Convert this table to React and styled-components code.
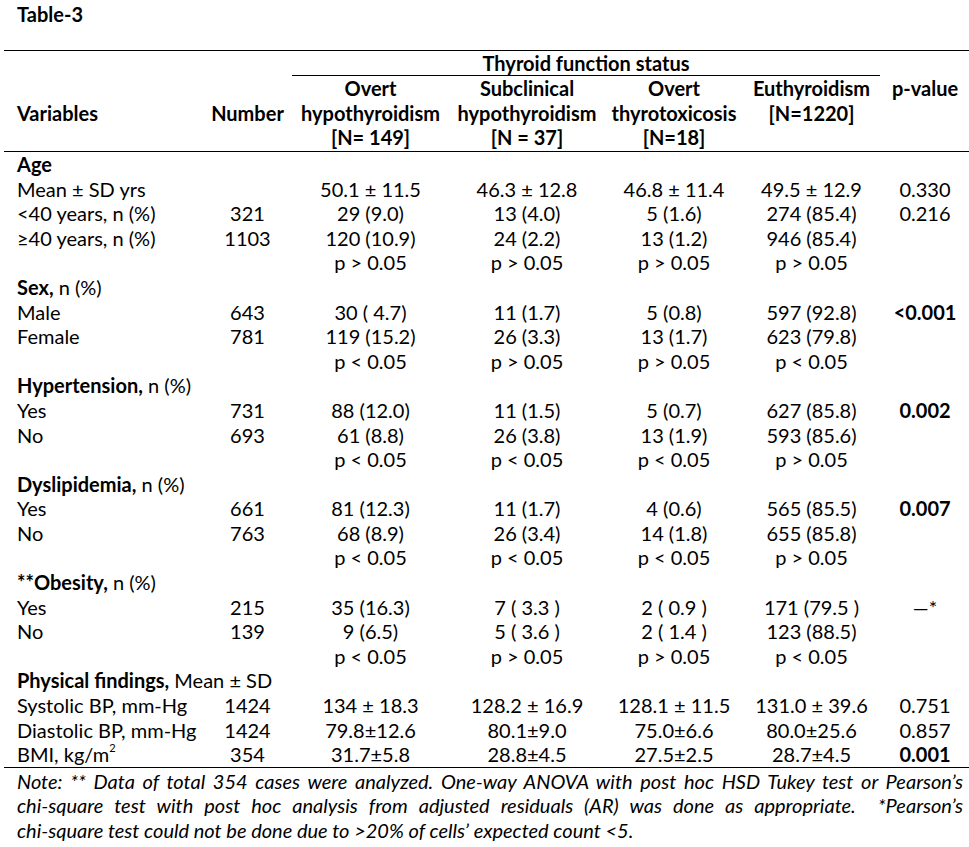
import React from 'react';
import styled, { createGlobalStyle } from 'styled-components';

const GlobalStyle = createGlobalStyle`
  body {
    margin: 0;
    background: #fff;
    color: #000;
    font-family: Lato, 'Liberation Sans', sans-serif;
  }
`;

const Page = styled.div`
  width: 966px;
  padding: 2px 0 0 4px;
  font-size: 20px;
  line-height: 24.6px;
  overflow: hidden;
`;

const Title = styled.div`
  font-weight: 700;
  padding-left: 13px;
  margin-bottom: 23px;
`;

const Table = styled.table`
  width: 966px;
  table-layout: fixed;
  border-collapse: collapse;
  border-top: 1px solid #000;
  border-bottom: 1px solid #000;
`;

const HeadRow = styled.tr`
  border-bottom: ${(p) => (p.$rule ? '1px solid #000' : 'none')};
`;

const HeadCell = styled.th`
  padding: ${(p) => (p.$pad ? p.$pad : '0')};
  font-weight: 700;
  text-align: ${(p) => (p.$left ? 'left' : 'center')};
  padding-left: ${(p) => (p.$left ? '13px' : '0')};
  vertical-align: ${(p) => (p.$middle ? 'middle' : 'top')};
  white-space: nowrap;
`;

const GroupCell = styled.th`
  padding: 0;
  font-weight: 700;
  text-align: center;
  border-bottom: 1px solid #000;
  white-space: nowrap;
`;

const Cell = styled.td`
  padding: 0;
  text-align: center;
  vertical-align: top;
  white-space: nowrap;
  font-weight: ${(p) => (p.$bold ? 700 : 400)};
`;

const LabelCell = styled(Cell)`
  text-align: left;
  padding-left: 13px;
`;

const Strong = styled.b`
  font-weight: 700;
`;

const Sup = styled.sup`
  font-size: 11px;
  line-height: 0;
  vertical-align: 10px;
`;

const Note = styled.div`
  margin: 1px 7px 0 13px;
  font-style: italic;
`;

const NoteLine = styled.div`
  text-align: ${(p) => (p.$justify ? 'justify' : 'left')};
  text-align-last: ${(p) => (p.$justify ? 'justify' : 'left')};
  white-space: nowrap;
`;

const rows = [
  { label: <Strong>Age</Strong> },
  { label: 'Mean ± SD yrs', vals: ['50.1 ± 11.5', '46.3 ± 12.8', '46.8 ± 11.4', '49.5 ± 12.9'], p: '0.330' },
  { label: '<40 years, n (%)', n: '321', vals: ['29 (9.0)', '13 (4.0)', '5 (1.6)', '274 (85.4)'], p: '0.216' },
  { label: '≥40 years, n (%)', n: '1103', vals: ['120 (10.9)', '24 (2.2)', '13 (1.2)', '946 (85.4)'] },
  { vals: ['p > 0.05', 'p > 0.05', 'p > 0.05', 'p > 0.05'] },
  { label: <><Strong>Sex,</Strong> n (%)</> },
  { label: 'Male', n: '643', vals: ['30 ( 4.7)', '11 (1.7)', '5 (0.8)', '597 (92.8)'], p: '<0.001', bold: true },
  { label: 'Female', n: '781', vals: ['119 (15.2)', '26 (3.3)', '13 (1.7)', '623 (79.8)'] },
  { vals: ['p < 0.05', 'p > 0.05', 'p > 0.05', 'p < 0.05'] },
  { label: <><Strong>Hypertension,</Strong> n (%)</> },
  { label: 'Yes', n: '731', vals: ['88 (12.0)', '11 (1.5)', '5 (0.7)', '627 (85.8)'], p: '0.002', bold: true },
  { label: 'No', n: '693', vals: ['61 (8.8)', '26 (3.8)', '13 (1.9)', '593 (85.6)'] },
  { vals: ['p < 0.05', 'p < 0.05', 'p < 0.05', 'p > 0.05'] },
  { label: <><Strong>Dyslipidemia,</Strong> n (%)</> },
  { label: 'Yes', n: '661', vals: ['81 (12.3)', '11 (1.7)', '4 (0.6)', '565 (85.5)'], p: '0.007', bold: true },
  { label: 'No', n: '763', vals: ['68 (8.9)', '26 (3.4)', '14 (1.8)', '655 (85.8)'] },
  { vals: ['p < 0.05', 'p < 0.05', 'p < 0.05', 'p > 0.05'] },
  { label: <><Strong>**Obesity,</Strong> n (%)</> },
  { label: 'Yes', n: '215', vals: ['35 (16.3)', '7 ( 3.3 )', '2 ( 0.9 )', '171 (79.5 )'], p: '—*' },
  { label: 'No', n: '139', vals: ['9 (6.5)', '5 ( 3.6 )', '2 ( 1.4 )', '123 (88.5)'] },
  { vals: ['p < 0.05', 'p > 0.05', 'p > 0.05', 'p < 0.05'] },
  { label: <><Strong>Physical findings,</Strong> Mean ± SD</> },
  { label: 'Systolic BP, mm-Hg', n: '1424', vals: ['134 ± 18.3', '128.2 ± 16.9', '128.1 ± 11.5', '131.0 ± 39.6'], p: '0.751' },
  { label: 'Diastolic BP, mm-Hg', n: '1424', vals: ['79.8±12.6', '80.1±9.0', '75.0±6.6', '80.0±25.6'], p: '0.857' },
  { label: <>BMI, kg/m<Sup>2</Sup></>, n: '354', vals: ['31.7±5.8', '28.8±4.5', '27.5±2.5', '28.7±4.5'], p: '0.001', bold: true },
];

const widths = [199, 89, 157, 156, 138, 137, 90];

export default function App() {
  return (
    <Page>
      <GlobalStyle />
      <Title>Table-3</Title>
      <Table>
        <colgroup>
          {widths.map((w, i) => <col key={i} style={{ width: w }} />)}
        </colgroup>
        <thead>
          <HeadRow>
            <HeadCell $pad="1px 0 0" />
            <HeadCell />
            <GroupCell colSpan={4}>Thyroid function status</GroupCell>
            <HeadCell />
          </HeadRow>
          <HeadRow $rule>
            <HeadCell $left $middle>Variables</HeadCell>
            <HeadCell $middle>Number</HeadCell>
            <HeadCell $pad="0 0 1px">Overt<br />hypothyroidism<br />[N= 149]</HeadCell>
            <HeadCell>Subclinical<br />hypothyroidism<br />[N = 37]</HeadCell>
            <HeadCell>Overt<br />thyrotoxicosis<br />[N=18]</HeadCell>
            <HeadCell>Euthyroidism<br />[N=1220]</HeadCell>
            <HeadCell>p-value</HeadCell>
          </HeadRow>
        </thead>
        <tbody>
          {rows.map((r, i) => (
            <tr key={i}>
              <LabelCell>{r.label}</LabelCell>
              <Cell>{r.n}</Cell>
              {[0, 1, 2, 3].map((j) => (
                <Cell key={j}>{r.vals ? r.vals[j] : ''}</Cell>
              ))}
              <Cell $bold={r.bold}>{r.p}</Cell>
            </tr>
          ))}
        </tbody>
      </Table>
      <Note>
        <NoteLine $justify>
          Note: ** Data of total 354 cases were analyzed. One-way ANOVA with post hoc HSD Tukey test or Pearson’s
        </NoteLine>
        <NoteLine $justify>
          chi-square test with post hoc analysis from adjusted residuals (AR) was done as appropriate.&nbsp; *Pearson’s
        </NoteLine>
        <NoteLine>
          chi-square test could not be done due to &gt;20% of cells’ expected count &lt;5.
        </NoteLine>
      </Note>
    </Page>
  );
}
